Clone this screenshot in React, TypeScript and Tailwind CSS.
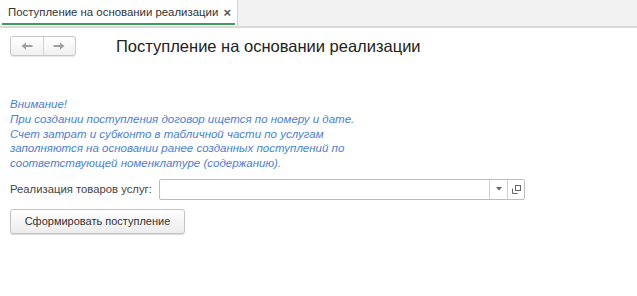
import React from "react";

export default function App() {
  return (
    <div className="w-[637px] h-[296px] bg-white overflow-hidden" style={{ fontFamily: '"Liberation Sans", Arial, sans-serif' }}>
      {/* Tab bar */}
      <div className="h-[28px] bg-[#f2f2f2] border-b-2 border-[#d9d9d9] flex">
        <div className="w-[238px] h-full bg-white border-r border-[#d4d4d4] flex flex-col">
          <div className="flex-1 flex items-center justify-between pl-[8px] pr-[6px] pt-[2px] text-[11.4px] text-[#333] whitespace-nowrap">
            <span>Поступление на основании реализации</span>
            <span className="text-[13px] text-[#555] font-bold leading-none">×</span>
          </div>
          <div className="h-[2px] bg-[#3c9d5c] mx-[2px] mb-[1px]"></div>
        </div>
      </div>

      {/* Header */}
      <div className="flex items-center pl-[10px] mt-[8px] h-[20px]">
        <div className="flex w-[66px] h-[20px] border border-[#c8c8c8] rounded-[3px] bg-gradient-to-b from-white to-[#f0f0f0] shadow-[0_1px_1px_rgba(0,0,0,0.1)]">
          <div className="flex-1 flex items-center justify-center border-r border-[#d4d4d4]">
            <svg width="12" height="8" viewBox="0 0 12 8"><path d="M4 4h7.5" stroke="#a0a0a0" strokeWidth="2" fill="none" /><path d="M0.5 4L5 0.5V7.5z" fill="#a0a0a0" /></svg>
          </div>
          <div className="flex-1 flex items-center justify-center">
            <svg width="12" height="8" viewBox="0 0 12 8"><path d="M0.5 4H8" stroke="#a0a0a0" strokeWidth="2" fill="none" /><path d="M11.5 4L7 0.5V7.5z" fill="#a0a0a0" /></svg>
          </div>
        </div>
        <div className="ml-[40px] text-[16.5px] text-[#222] whitespace-nowrap">Поступление на основании реализации</div>
      </div>

      {/* Notice */}
      <div className="mt-[41px] pl-[10px] text-[11.5px] leading-[14.75px] italic text-[#4a80d8] whitespace-nowrap">
        <div>Внимание!</div>
        <div>При создании поступления договор ищется по номеру и дате.</div>
        <div>Счет затрат и субконто в табличной части по услугам</div>
        <div>заполняются на основании ранее созданных поступлений по</div>
        <div>соответствующей номенклатуре (содержанию).</div>
      </div>

      {/* Field */}
      <div className="flex items-center pl-[10px] mt-[8px]">
        <span className="w-[149px] text-[11.3px] text-[#444] whitespace-nowrap">Реализация товаров услуг:</span>
        <div className="w-[366px] h-[21px] border border-[#bcbcbc] rounded-[2px] flex bg-white">
          <div className="flex-1"></div>
          <div className="w-[18px] border-l border-[#d0d0d0] flex items-center justify-center">
            <svg width="6" height="4" viewBox="0 0 6 4"><path d="M0 0h6L3 3.5z" fill="#666" /></svg>
          </div>
          <div className="w-[17px] border-l border-[#d0d0d0] flex items-center justify-center">
            <svg width="9" height="9" viewBox="0 0 9 9"><rect x="3.5" y="0.5" width="5" height="5" fill="none" stroke="#666" /><path d="M0.5 3.5v5h5" fill="none" stroke="#666" /></svg>
          </div>
        </div>
      </div>

      {/* Button */}
      <div className="pl-[10px] mt-[8px]">
        <div className="inline-flex items-center justify-center w-[175px] h-[25px] border border-[#c4c4c4] rounded-[3px] bg-gradient-to-b from-white to-[#ececec] shadow-[0_1px_1px_rgba(0,0,0,0.15)] text-[11px] text-[#333] whitespace-nowrap">
          Сформировать поступление
        </div>
      </div>
    </div>
  );
}
